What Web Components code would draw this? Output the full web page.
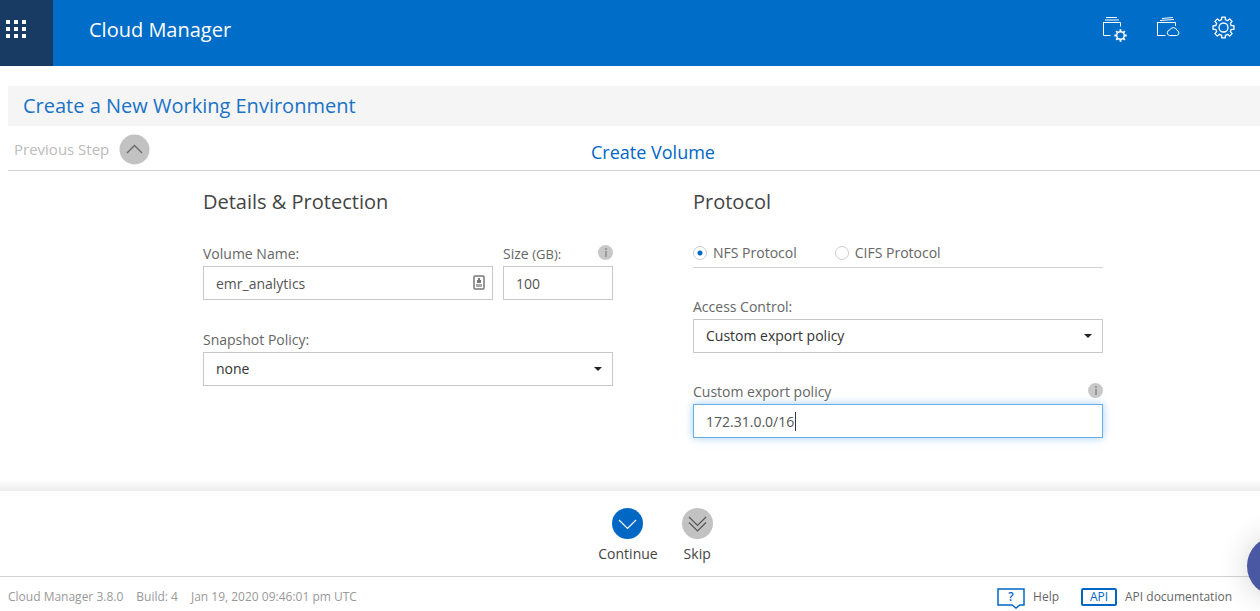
<!DOCTYPE html>
<html lang="en">
<head>
<meta charset="utf-8">
<meta name="viewport" content="width=device-width, initial-scale=1">
<title>Cloud Manager</title>
<style>
  body { margin: 0; background: #fff; color: #444; font: 14px/20px "Open Sans", sans-serif; }
</style>
</head>
<body>
<cm-app></cm-app>

<script>
const base = `<style>
  *, *::before, *::after { box-sizing: border-box; }
  button, input, select { font: inherit; }
  button { margin: 0; padding: 0; border: 0; background: none; color: inherit; cursor: pointer; }
  a { color: inherit; text-decoration: none; }
  svg { display: block; }
  h1, h2, h3 { margin: 0; font-weight: 400; }
</style>`;

class CmElement extends HTMLElement {
  constructor() {
    super();
    this.attachShadow({ mode: "open" });
  }
  connectedCallback() {
    if (!this.shadowRoot.firstChild) {
      this.shadowRoot.innerHTML = base + this.render();
      this.ready();
    }
  }
  attr(name, fallback = "") { return this.getAttribute(name) ?? fallback; }
  ready() {}
}

// Outline of a cog centred on (cx, cy)
function cog(cx, cy, outer, inner, teeth) {
  const pts = [];
  const step = Math.PI * 2 / teeth;
  for (let i = 0; i < teeth; i++) {
    const a = i * step - Math.PI / 2;
    for (const [r, f] of [[inner, -0.3], [outer, -0.21], [outer, 0.21], [inner, 0.3]]) {
      const t = a + f * step;
      pts.push((cx + r * Math.cos(t)).toFixed(2) + " " + (cy + r * Math.sin(t)).toFixed(2));
    }
  }
  return "M" + pts.join("L") + "Z";
}

customElements.define("cm-header", class extends CmElement {
  render() {
    return `<style>
      :host { display: flex; min-height: 66px; background: #006dc9; color: #fff; }
      .apps { width: 53px; padding: 20px 0 0 6px; background: #173b63; display: flex; align-items: flex-start; }
      h1 { flex: 1; padding: 16px 36px 0; font-size: 20px; line-height: 28px; }
      nav { display: flex; align-items: flex-start; gap: 28px; padding: 14px 24px 0 0; }
      nav svg { overflow: visible; }
    </style>
    <button class="apps" aria-label="Applications">
      <svg width="20" height="18" fill="#fff"><path d="M0 0h4v4H0zM8 0h4v4H8zM16 0h4v4h-4zM0 7h4v4H0zM8 7h4v4H8zM16 7h4v4h-4zM0 14h4v4H0zM8 14h4v4H8zM16 14h4v4h-4z"/></svg>
    </button>
    <h1>Cloud Manager</h1>
    <nav>
      <button aria-label="Environment settings">
        <svg width="27" height="28" fill="none" stroke="#fff">
          <path d="M7 3.500h11M6 6h14M4 8.500h17.500v4M4.500 8v13.500h7"/>
          <circle cx="21.500" cy="21.500" r="3.800" stroke-width="1.500"/>
          <path stroke-width="1.900" d="M21.500 17.500v-2.200M21.500 25.500v2.200M17.500 21.500h-2.200M25.500 21.500h2.200M18.670 18.670l-1.500-1.500M24.330 24.330l1.500 1.500M18.670 24.330l-1.500 1.500M24.330 18.670l1.500-1.500"/>
        </svg>
      </button>
      <button aria-label="Cloud environments">
        <svg width="27" height="28" fill="none" stroke="#fff">
          <path d="M8 4.500l11-1M6 6.500l14-1M3 8.500h18.500v3.500M3.500 8v13.500h8"/>
          <path d="M15.500 21.500h7a2.600 2.600 0 0 0 .500-5.100a3.900 3.900 0 0 0-7.300-.400a2.800 2.800 0 0 0-.200 5.500z"/>
        </svg>
      </button>
      <button aria-label="Settings">
        <svg width="27" height="28" fill="none" stroke="#fff" stroke-width="1.300">
          <path stroke-linejoin="round" d="${cog(14.5, 13.5, 10.6, 8, 8)}"/><circle cx="14.500" cy="13.500" r="4.500"/>
        </svg>
      </button>
    </nav>`;
  }
});

customElements.define("cm-step-bar", class extends CmElement {
  render() {
    return `<style>
      :host { display: block; margin: 20px 0 0 8px; }
      h2 { padding: 6px 15px; background: #f5f5f5; color: #1873c6; font-size: 20px; line-height: 28px; }
      .row { display: grid; grid-template-columns: 1fr auto 1fr; align-items: center; min-height: 45px;
             padding: 2px 0 0 6px; border-bottom: 1px solid #d2d2d2; }
      button { display: flex; align-items: center; gap: 10px; color: #bbb; justify-self: start; font-size: 15px; }
      h3 { padding: 6px 0 0 32px; color: #0067c5; font-size: 18px; line-height: 24px; }
    </style>
    <h2><slot name="title"></slot></h2>
    <div class="row">
      <button>Previous Step
        <svg width="31" height="31" fill="none"><circle cx="15.500" cy="15.500" r="15" fill="#c2c2c2"/><path d="M8 19l7.500-7.500L23 19" stroke="#666" stroke-width="1.300"/></svg>
      </button>
      <h3><slot></slot></h3>
    </div>`;
  }
});

customElements.define("cm-info", class extends CmElement {
  render() {
    return `<style>:host { display: block; padding-top: 1px; }</style>
    <svg width="15" height="15" role="img" aria-label="Information"><circle cx="7.500" cy="7.500" r="7.500" fill="#c8c8c8"/><path d="M7 3h2v2H7zM7 6h2v6H7z" fill="#999"/></svg>`;
  }
});

const fieldCss = `
  :host { display: block; min-width: 0; }
  .top { display: flex; justify-content: space-between; align-items: flex-start; height: 20px; margin-bottom: 2px; }
  label { color: #666; }
  input, select { display: block; width: 100%; height: 34px; margin: 0; padding: 0 12px; border: 1px solid #c8c8c8;
    border-radius: 0; background: #fff; outline: 0; appearance: none; }
  .box { position: relative; }
  .box svg { position: absolute; pointer-events: none; }`;

customElements.define("cm-field", class extends CmElement {
  render() {
    return `<style>${fieldCss}
      input { color: #555; }
      input:focus { border-color: #66afe9; box-shadow: 0 0 8px rgba(102,175,233,.6); }
      small { font-size: 13px; }
      .box svg { right: 8px; top: 9px; }
      .active { caret-color: transparent; background: linear-gradient(#333, #333) 101px 7px / 1px 19px no-repeat #fff; }
    </style>
    <div class="top"><label for="field">${this.attr("label")}${this.hasAttribute("unit") ? ` <small>(${this.attr("unit")}):</small>` : ""}</label>
      ${this.hasAttribute("info") ? "<cm-info></cm-info>" : ""}</div>
    <div class="box">
      <input id="field" type="text" value="${this.attr("value")}" class="${this.hasAttribute("active") ? "active" : ""}">
      ${this.hasAttribute("autofill") ? `<svg width="12" height="15"><rect x="1" y="1" width="10" height="13" rx="1" fill="#fff" stroke="#777" stroke-width="1.500"/><path d="M5 3h2v2h1v3H4V5h1z" fill="#777"/><path d="M3 9h6v3H3z" fill="#aaa"/></svg>` : ""}
    </div>`;
  }
  ready() {
    if (this.hasAttribute("active")) {
      const input = this.shadowRoot.querySelector("input");
      input.focus();
      input.setSelectionRange(input.value.length, input.value.length);
      input.addEventListener("input", () => input.classList.remove("active"));
      input.addEventListener("blur", () => input.classList.remove("active"));
    }
  }
});

customElements.define("cm-select", class extends CmElement {
  render() {
    return `<style>${fieldCss}
      select { color: #333; }
      .box svg { right: 11px; top: 15px; }
    </style>
    <div class="top"><label for="choice">${this.attr("label")}</label></div>
    <div class="box">
      <select id="choice"><option>${this.attr("value")}</option></select>
      <svg width="8" height="4"><path d="M0 0h8L4 4z" fill="#222"/></svg>
    </div>`;
  }
});

customElements.define("cm-protocol", class extends CmElement {
  render() {
    return `<style>
      :host { display: flex; gap: 38px; height: 24px; padding-bottom: 5px; border-bottom: 1px solid #d2d2d2; color: #666; }
      label { display: flex; align-items: center; gap: 6px; }
      input { appearance: none; width: 14px; height: 14px; margin: 0; border: 1px solid #ccc; border-radius: 50%; background: #fff; }
      input:checked { background: radial-gradient(circle, #0067c5 2px, #fff 3px); }
    </style>
    <label><input type="radio" name="protocol" checked>NFS Protocol</label>
    <label><input type="radio" name="protocol">CIFS Protocol</label>`;
  }
});

customElements.define("cm-section", class extends CmElement {
  render() {
    return `<style>
      :host { display: block; min-width: 0; }
      h3 { margin-bottom: 28px; color: #444; font-size: 20px; line-height: 28px; }
      .fields { display: flex; flex-direction: column; gap: var(--field-gap, 30px); }
    </style>
    <h3>${this.attr("heading")}</h3>
    <div class="fields"><slot></slot></div>`;
  }
});

customElements.define("cm-action", class extends CmElement {
  render() {
    const primary = this.hasAttribute("primary");
    const arrows = primary ? "M7 12l8.500 8.500L24 12" : "M7 9l8.500 8.500L24 9M7 14.500L15.500 23L24 14.500";
    return `<style>
      :host { display: block; }
      button { display: flex; flex-direction: column; align-items: center; gap: 5px; color: #444; }
    </style>
    <button>
      <svg width="31" height="31" fill="none"><circle cx="15.500" cy="15.500" r="15.500" fill="${primary ? "#0067c5" : "#c2c2c2"}"/>
      <path d="${arrows}" stroke="${primary ? "#fff" : "#555"}" stroke-width="1.200"/></svg>
      <slot></slot>
    </button>`;
  }
});

customElements.define("cm-footer", class extends CmElement {
  render() {
    return `<style>
      :host { display: flex; align-items: center; gap: 13px; min-height: 35px; padding: 6px 28px 0 8px;
              border-top: 1px solid #d2d2d2; color: #999; font-size: 12px; line-height: 18px; }
      nav { display: flex; gap: 22px; margin-left: auto; color: #666; }
      a { display: flex; align-items: center; gap: 8px; }
      .badge { display: block; color: #0067c5; text-align: center; }
      .api { width: 36px; border: 2px solid #0067c5; border-radius: 2px; line-height: 14px; }
      .help { position: relative; width: 28px; line-height: 18px; font-weight: 600; }
      .help svg { position: absolute; left: 0; top: 0; }
    </style>
    <span>Cloud Manager 3.8.0</span><span>Build: 4</span><span>Jan 19, 2020 09:46:01 pm UTC</span>
    <nav>
      <a href="#help"><span class="badge help"><svg width="28" height="21" fill="none" stroke="#0067c5" stroke-width="1.500"><path d="M1 1h26v16h-4l-4 3-4-3H1z"/></svg>?</span>Help</a>
      <a href="#api"><span class="badge api">API</span>API documentation</a>
    </nav>`;
  }
});

customElements.define("cm-chat", class extends CmElement {
  render() {
    return `<style>
      :host { position: fixed; right: -47px; bottom: 15px; }
      button { display: block; width: 60px; height: 60px; border-radius: 50%; background: #4a57a3; box-shadow: 0 1px 30px rgba(0,0,0,.18); }
    </style><button aria-label="Chat"></button>`;
  }
});

customElements.define("cm-app", class extends CmElement {
  render() {
    return `<style>
      :host { display: flex; flex-direction: column; min-height: 100vh; overflow-x: hidden; }
      main { flex: 1; padding: 17px 0 32px 46px; }
      form { display: grid; grid-template-columns: 1fr 1fr; gap: 80px; width: min(900px, 100%); margin: 0 auto; }
      .pair { display: grid; grid-template-columns: 1fr 110px; gap: 10px; }
      .protocol { --field-gap: 29px; }
      .fade { height: 11px; background: linear-gradient(#fff, #ececec); }
      .actions { display: flex; justify-content: center; gap: 24px; padding: 17px 0 12px 51px; }
    </style>
    <cm-header></cm-header>
    <cm-step-bar><span slot="title">Create a New Working Environment</span>Create Volume</cm-step-bar>
    <main>
      <form>
        <cm-section heading="Details &amp; Protection">
          <div class="pair">
            <cm-field label="Volume Name:" value="emr_analytics" autofill></cm-field>
            <cm-field label="Size" unit="GB" value="100" info></cm-field>
          </div>
          <cm-select label="Snapshot Policy:" value="none"></cm-select>
        </cm-section>
        <cm-section class="protocol" heading="Protocol">
          <cm-protocol></cm-protocol>
          <cm-select label="Access Control:" value="Custom export policy"></cm-select>
          <cm-field label="Custom export policy" value="172.31.0.0/16" info active></cm-field>
        </cm-section>
      </form>
    </main>
    <div class="fade"></div>
    <div class="actions"><cm-action primary>Continue</cm-action><cm-action>Skip</cm-action></div>
    <cm-footer></cm-footer>
    <cm-chat></cm-chat>`;
  }
});
</script>
</body>
</html>
